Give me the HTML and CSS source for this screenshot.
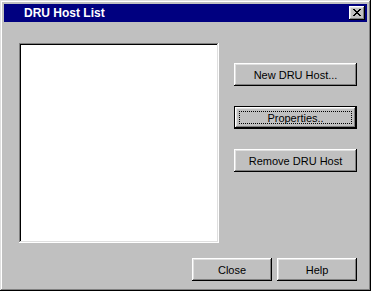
FILE: index.html
```html
<!DOCTYPE html>
<html lang="en">
<head>
    <meta charset="UTF-8">
    <title>DRU Host List</title>
    <link rel="stylesheet" href="styles.css">
</head>
<body>
    <div class="window">
        <div class="title-bar">
            <span class="title">DRU Host List</span>
            <button class="title-close" aria-label="Close">
                <svg width="8" height="7" viewBox="0 0 8 7" shape-rendering="crispEdges">
                    <path fill="#000" d="M0 0h2v1H0zM6 0h2v1H6zM1 1h2v1H1zM5 1h2v1H5zM2 2h4v1H2zM3 3h2v1H3zM2 4h4v1H2zM1 5h2v1H1zM5 5h2v1H5zM0 6h2v1H0zM6 6h2v1H6z"/>
                </svg>
            </button>
        </div>

        <div class="content">
            <div class="main-row">
                <div class="listbox"></div>
                <div class="side-buttons">
                    <button class="btn">New DRU Host...</button>
                    <button class="btn default"><span class="focus">Properties..</span></button>
                    <button class="btn">Remove DRU Host</button>
                </div>
            </div>
            <div class="bottom-row">
                <button class="btn small">Close</button>
                <button class="btn small">Help</button>
            </div>
        </div>
    </div>
</body>
</html>
```

FILE: styles.css
```css
body {
    margin: 0;
    background-color: #c0c0c0;
    font-family: "Liberation Sans", Arial, sans-serif;
    font-size: 11px;
}
.window {
    width: 371px;
    height: 291px;
    box-sizing: border-box;
    padding: 4px;
    background-color: #c0c0c0;
    box-shadow: inset -1px -1px #000, inset 1px 1px #dfdfdf, inset -2px -2px #808080, inset 2px 2px #fff;
}
.title-bar {
    height: 18px;
    background-color: #000080;
    display: flex;
    align-items: center;
    justify-content: space-between;
    padding: 0 2px 0 20px;
}
.title {
    color: white;
    font-weight: bold;
    font-size: 12px;
}
.title-close {
    width: 16px;
    height: 14px;
    padding: 0;
    border: none;
    background-color: #c0c0c0;
    box-shadow: inset -1px -1px #000, inset 1px 1px #fff, inset -2px -2px #808080, inset 2px 2px #dfdfdf;
    display: flex;
    align-items: center;
    justify-content: center;
}
.title-close svg {
    display: block;
    margin: 0 0 1px 0;
}
.content {
    padding: 21px 10px 0 15px;
}
.main-row {
    display: flex;
}
.listbox {
    width: 200px;
    height: 200px;
    background-color: white;
    box-shadow: inset -1px -1px #fff, inset 1px 1px #808080, inset -2px -2px #dfdfdf, inset 2px 2px #000;
}
.side-buttons {
    display: flex;
    flex-direction: column;
    gap: 20px;
    margin-left: 15px;
    padding-top: 20px;
}
.btn {
    width: 123px;
    height: 23px;
    padding: 0;
    border: none;
    background-color: #c0c0c0;
    font-family: "Liberation Sans", Arial, sans-serif;
    font-size: 11px;
    color: #000;
    box-shadow: inset -1px -1px #000, inset 1px 1px #fff, inset -2px -2px #808080, inset 2px 2px #dfdfdf;
}
.btn.default {
    border: 1px solid #000;
    display: flex;
    padding: 4px;
    box-sizing: border-box;
}
.focus {
    flex: 1;
    display: flex;
    align-items: center;
    justify-content: center;
    border: 1px dotted #000;
}
.btn.small {
    width: 80px;
}
.bottom-row {
    display: flex;
    justify-content: flex-end;
    gap: 5px;
    margin-top: 15px;
}
```
